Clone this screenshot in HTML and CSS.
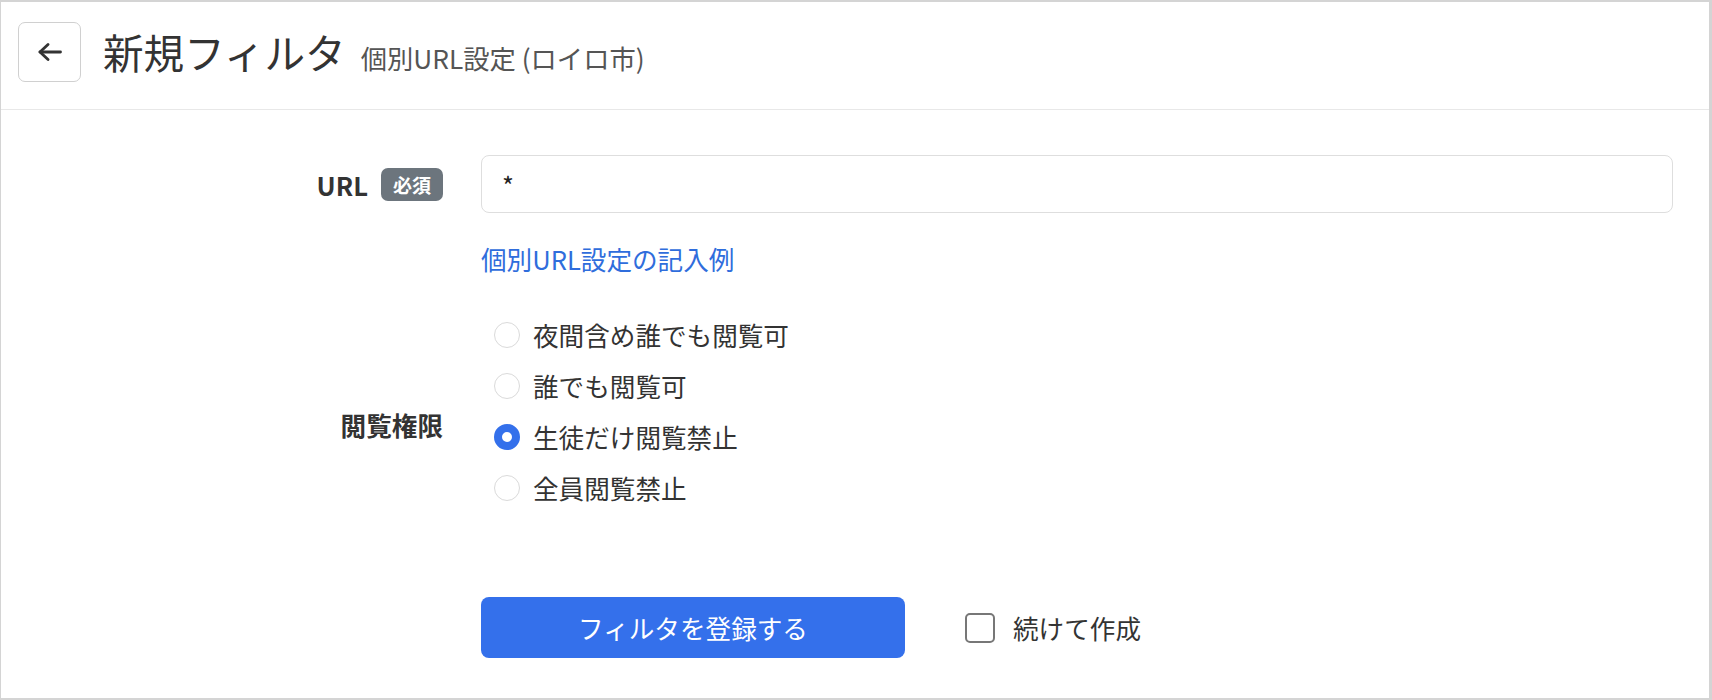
FILE: index.html
```html
<!DOCTYPE html>
<html lang="ja">
<head>
<meta charset="utf-8">
<title>新規フィルタ</title>
<link rel="stylesheet" href="styles.css">
</head>
<body>
<div class="frame">
  <header class="head">
    <button class="back" type="button" aria-label="戻る">
      <svg width="24" height="18" viewBox="0 0 24 18" fill="none" stroke="#333" stroke-width="2.8" stroke-linecap="round" stroke-linejoin="round"><path d="M22.5 9H2"/><path d="M10 1.5L2 9l8 7.5"/></svg>
    </button>
    <div class="titles">
      <h1 class="title">新規フィルタ</h1>
      <span class="subtitle">個別URL設定 (ロイロ市)</span>
    </div>
  </header>
  <form class="form">
    <div class="label label-url">URL <span class="badge">必須</span></div>
    <div class="control">
      <div class="input">*</div>
      <a class="link" href="#">個別URL設定の記入例</a>
    </div>

    <div class="label label-perm">閲覧権限</div>
    <div class="control radios">
      <label class="radio"><span class="dot"></span>夜間含め誰でも閲覧可</label>
      <label class="radio"><span class="dot"></span>誰でも閲覧可</label>
      <label class="radio"><span class="dot on"></span>生徒だけ閲覧禁止</label>
      <label class="radio"><span class="dot"></span>全員閲覧禁止</label>
    </div>

    <div class="label"></div>
    <div class="control actions">
      <button class="submit" type="button">フィルタを登録する</button>
      <label class="check"><span class="box"></span>続けて作成</label>
    </div>
  </form>
</div>
</body>
</html>
```

FILE: styles.css
```css
* { box-sizing: border-box; }
html, body { margin: 0; padding: 0; background: #fff; }
body {
  font-family: "Noto Sans CJK JP", "Noto Sans", sans-serif;
  color: #333;
  font-size: 25.6px;
}
.frame {
  width: 1712px;
  height: 700px;
  border-style: solid;
  border-color: #d4d4d4;
  border-width: 2px 3px 2px 1px;
  background: #fff;
}
.head {
  display: flex;
  align-items: center;
  padding: 20px 0 27px 17px;
  border-bottom: 1px solid #e8e8e8;
}
.back {
  width: 63px;
  height: 60px;
  border: 1px solid #d0d0d0;
  border-radius: 7px;
  background: #fff;
  display: flex;
  align-items: center;
  justify-content: center;
  padding: 0;
  margin: 0;
}
.titles {
  display: flex;
  align-items: baseline;
  margin-left: 22px;
}
.title {
  margin: 0;
  font-size: 40.6px;
  font-weight: 400;
  line-height: 1.2;
  color: #333;
}
.subtitle {
  margin-left: 15px;
  font-size: 26.3px;
  color: #555;
}
.form {
  display: grid;
  grid-template-columns: 442px 1fr;
  column-gap: 38px;
  padding: 45px 36px 0 0;
  align-items: start;
}
.label {
  text-align: right;
  font-weight: 700;
  font-size: 25.6px;
}
.label-url {
  display: flex;
  justify-content: flex-end;
  align-items: center;
  height: 58px;
}
.badge {
  display: inline-block;
  margin-left: 13px;
  background: #6c757d;
  color: #fff;
  font-size: 19px;
  font-weight: 700;
  line-height: 1;
  padding: 7px 12px;
  border-radius: 7px;
}
.label-perm { align-self: center; margin-top: 58px; }
.input {
  height: 58px;
  border: 1px solid #dedede;
  border-radius: 8px;
  padding: 0 20px;
  display: flex;
  align-items: center;
  font-size: 25.6px;
  color: #222;
}
.link {
  display: inline-block;
  margin-top: 27px;
  color: #2f6ddc;
  text-decoration: none;
  font-size: 25.6px;
  line-height: 1.5;
}
.radios {
  display: flex;
  flex-direction: column;
  padding: 31px 0 0 13px;
}
.radio {
  display: flex;
  align-items: center;
  height: 51px;
  font-size: 25.6px;
}
.dot {
  width: 26px;
  height: 26px;
  border-radius: 50%;
  border: 1px solid #dadada;
  background: #fff;
  margin-right: 13px;
  flex: none;
}
.dot.on {
  border: 8px solid #3470eb;
}
.actions {
  display: flex;
  align-items: center;
  margin-top: 84px;
}
.submit {
  width: 424px;
  height: 61px;
  border: none;
  border-radius: 8px;
  background: #3470eb;
  color: #fff;
  font-family: inherit;
  font-size: 25.6px;
}
.check {
  display: flex;
  align-items: center;
  margin-left: 60px;
  font-size: 25.6px;
}
.box {
  width: 30px;
  height: 30px;
  border: 2px solid #777;
  border-radius: 5px;
  margin-right: 18px;
}
```
